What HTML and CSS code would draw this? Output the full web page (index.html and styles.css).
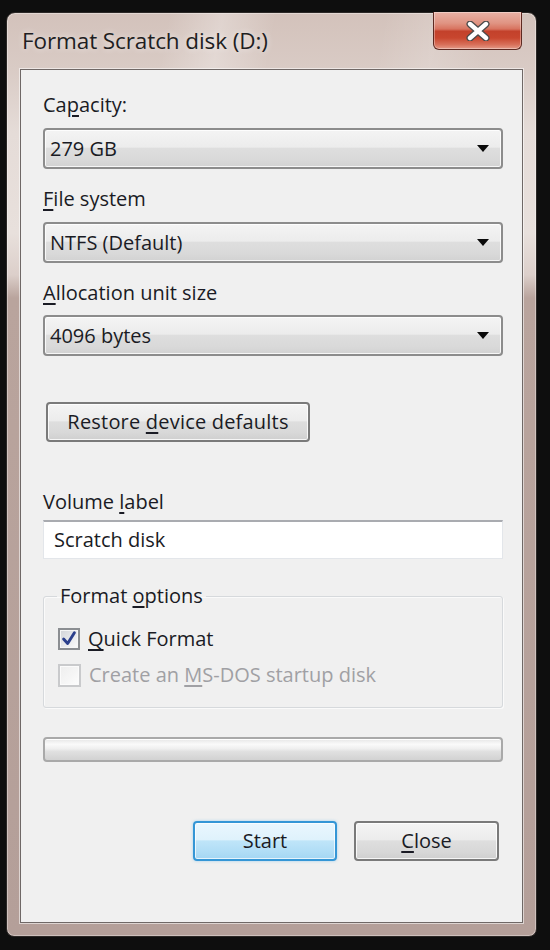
FILE: index.html
```html
<!DOCTYPE html>
<html>
<head>
<meta charset="utf-8">
<link rel="stylesheet" href="styles.css">
</head>
<body>
<div class="window">
  <div class="titlebar">
    <span class="title">Format Scratch disk (D:)</span>
    <div class="close-x">
      <svg width="26" height="20" viewBox="0 0 26 20">
        <path d="M5 3 L21 17 M21 3 L5 17" stroke="#4a4a4a" stroke-width="7" stroke-linecap="round"/>
        <path d="M5 3 L21 17 M21 3 L5 17" stroke="#ffffff" stroke-width="4.4" stroke-linecap="round"/>
      </svg>
    </div>
  </div>
  <div class="client">
    <div class="label l-first">Ca<u>p</u>acity:</div>
    <div class="combo c-first"><span>279 GB</span><i class="arrow"></i></div>
    <div class="label l-next"><u>F</u>ile system</div>
    <div class="combo"><span>NTFS (Default)</span><i class="arrow"></i></div>
    <div class="label l-next"><u>A</u>llocation unit size</div>
    <div class="combo c-last"><span>4096 bytes</span><i class="arrow"></i></div>
    <div class="btn restore"><span>Restore <u>d</u>evice defaults</span></div>
    <div class="label l-vol">Volume <u>l</u>abel</div>
    <div class="input">Scratch disk</div>
    <fieldset class="group">
      <legend>Format <u>o</u>ptions</legend>
      <div class="row row1">
        <span class="cb checked">
          <svg width="20" height="20" viewBox="0 0 20 20"><path d="M4 10 L8.5 15 L16 3" fill="none" stroke="#2b3f8c" stroke-width="3.2" stroke-linejoin="round" stroke-linecap="round"/></svg>
        </span>
        <span><u>Q</u>uick Format</span>
      </div>
      <div class="row row2 disabled">
        <span class="cb off"></span>
        <span>Create an <u>M</u>S-DOS startup disk</span>
      </div>
    </fieldset>
    <div class="progress"></div>
    <div class="buttons">
      <div class="btn start"><span>Start</span></div>
      <div class="btn close"><span><u>C</u>lose</span></div>
    </div>
  </div>
</div>
</body>
</html>
```
FILE: styles.css
```css
* { box-sizing: border-box; }
html, body { margin: 0; padding: 0; }
body {
  background: #0e0e0e;
  width: 550px;
  height: 950px;
  padding: 12px 0 0 6px;
  font-family: "Open Sans", "Noto Sans", sans-serif;
  color: #1a1b24;
  overflow: hidden;
}
u { text-decoration: underline; text-underline-offset: 3px; text-decoration-thickness: 1.5px; }

.window {
  width: 531px;
  height: 925px;
  border: 1px solid #2c2826;
  border-radius: 9px 9px 8px 8px;
  background:
    linear-gradient(100deg, rgba(255,255,255,0) 30%, rgba(255,255,255,0.28) 40%, rgba(255,255,255,0) 50%, rgba(255,255,255,0) 70%, rgba(255,255,255,0.15) 80%, rgba(255,255,255,0) 90%) 0 0 / 100% 60px no-repeat,
    linear-gradient(180deg, #d3c2bb 0px, #d9cbc5 56px, #e5dcd8 120px, #e8e0dc 220px, #dccfca 262px, #b9a49d 285px, #b49f99 100%);
  display: flex;
  flex-direction: column;
  box-shadow: inset 0 0 0 1px rgba(255,255,255,0.35);
}

.titlebar {
  height: 56px;
  display: flex;
  align-items: center;
  padding-left: 15px;
}
.title {
  font-size: 22.5px;
  line-height: 30px;
  color: #1e1e22;
  text-shadow: 0 0 6px rgba(255,255,255,0.7);
  letter-spacing: -0.1px;
}
.close-x {
  margin-left: auto;
  margin-right: 14px;
  align-self: flex-start;
  margin-top: -1px;
  width: 89px;
  height: 38px;
  border: 1px solid #5e2a22;
  border-top: none;
  border-radius: 0 0 6px 6px;
  background: linear-gradient(180deg, #e9b1a5 0%, #e09483 30%, #d8735f 46%, #c3412b 52%, #c8462e 70%, #d8705a 88%, #e49a88 100%);
  box-shadow: inset 0 0 0 1px rgba(255,255,255,0.35);
  display: flex;
  align-items: center;
  justify-content: center;
  padding-top: 1px;
}
.close-x svg { display: block; }

.client {
  margin: 0 13px 13px 13px;
  height: 854px;
  border: 1px solid #6f6866;
  background: #f0f0f0;
  box-shadow: 0 0 0 1px rgba(255,255,255,0.55);
  padding: 23px 19px 0 22px;
  display: flex;
  flex-direction: column;
  font-size: 20px;
}

.label { line-height: 24px; height: 24px; }
.l-next { margin-top: 18px; }
.l-vol { margin-top: 48px; }

.combo {
  margin-top: 11px;
  height: 41px;
  border: 2px solid #8c8c8c;
  border-radius: 4px;
  background: linear-gradient(180deg, #f4f4f4 0%, #ececec 46%, #dedede 50%, #d9d9d9 80%, #d2d2d2 100%);
  box-shadow: inset 0 0 0 1px rgba(255,255,255,0.8);
  display: flex;
  align-items: center;
  padding-left: 5px;
  line-height: 24px;
}
.c-last { margin-top: 10px; }
.arrow {
  margin-left: auto;
  margin-right: 12px;
  width: 0;
  height: 0;
  border-left: 6.5px solid transparent;
  border-right: 6.5px solid transparent;
  border-top: 7px solid #0a0a0a;
}

.btn {
  height: 40px;
  border: 2px solid #7a7a7a;
  border-radius: 4px;
  background: linear-gradient(180deg, #f4f4f4 0%, #ececec 46%, #dedede 50%, #d8d8d8 80%, #cfcfcf 100%);
  box-shadow: inset 0 0 0 1px rgba(255,255,255,0.8);
  display: flex;
  align-items: center;
  justify-content: center;
  line-height: 24px;
}
.restore {
  margin-top: 46px;
  margin-left: 3px;
  width: 264px;
  letter-spacing: 0.2px;
}

.input {
  margin-top: 6px;
  height: 39px;
  background: #fff;
  border: 1px solid #e3e6ea;
  border-top: 2px solid #a9abb0;
  padding-left: 10px;
  display: flex;
  align-items: center;
  line-height: 24px;
}

.group {
  margin: 25px 0 0 0;
  padding: 0 0 20px 0;
  border: 1px solid #d6d9dc;
  border-radius: 3px;
  box-shadow: inset 1px 1px 0 #fafafa, 1px 1px 0 #fafafa;
  min-width: 0;
}
.group legend {
  margin-left: 13px;
  padding: 0 3px;
  line-height: 24px;
  font-size: 20px;
}
.row {
  display: flex;
  align-items: center;
  height: 24px;
  padding-left: 14px;
  gap: 8px;
  line-height: 24px;
}
.row1 { margin-top: 19px; }
.row2 { margin-top: 12px; }
.disabled { color: #a0a0a4; }
.cb {
  width: 22px;
  height: 22px;
  flex: none;
  display: flex;
  align-items: center;
  justify-content: center;
}
.cb.checked {
  border: 2px solid #8b8e92;
  background: linear-gradient(135deg, #d2d4d8 0%, #e6e7ea 50%, #fbfbfb 100%);
  box-shadow: inset 0 0 0 1px #f6f6f6;
}
.cb.off {
  width: 23px;
  height: 23px;
  border: 2px solid #c9cacc;
  background: linear-gradient(135deg, #eeeeee 0%, #f6f6f6 60%, #fdfdfd 100%);
  box-shadow: inset 0 0 0 1px #fbfbfb;
}
.cb svg { display: block; }

.progress {
  margin-top: 29px;
  height: 25px;
  border: 2px solid #a9a9a9;
  border-radius: 4px;
  background: linear-gradient(180deg, #e6e6e6 0%, #fafafa 25%, #f0f0f0 45%, #e0e0e0 60%, #d2d2d2 100%);
  box-shadow: inset 0 1px 0 #ffffff;
}

.buttons {
  margin-top: 59px;
  display: flex;
  justify-content: flex-end;
  gap: 17px;
  padding-right: 4px;
}
.start {
  width: 144px;
  border-color: #3496d6;
  background: linear-gradient(180deg, #eaf7fe 0%, #dff2fc 46%, #bfe5f9 50%, #b0ddf6 80%, #a3d6f3 100%);
  box-shadow: inset 0 0 0 1px rgba(255,255,255,0.7), 0 0 3px rgba(80,180,240,0.5);
}
.close { width: 145px; }
```
